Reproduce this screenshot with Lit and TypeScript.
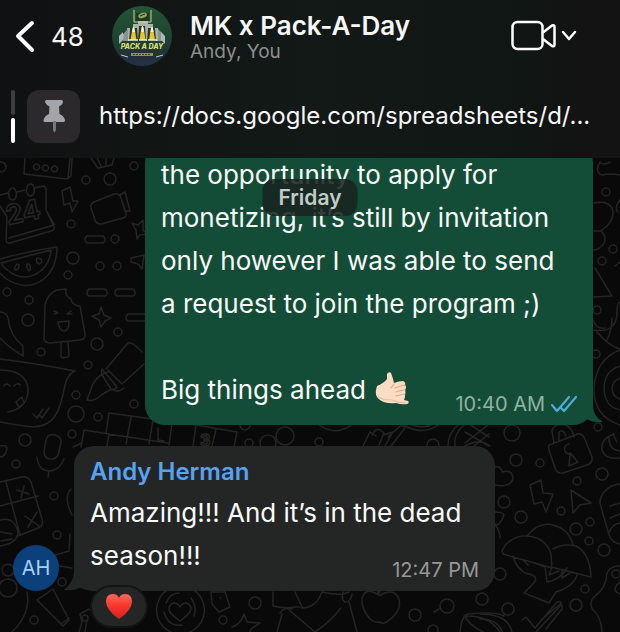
import { LitElement, html, css, svg } from "lit";
import { customElement, property } from "lit/decorators.js";

const dots: [number, number, number][] = [
  [134, 166, 4], [86, 180, 4], [110, 179, 6], [71, 224, 4], [115, 239, 4], [73, 258, 6],
  [100, 266, 4], [117, 266, 4], [68, 275, 4], [7, 292, 4], [29, 300, 4], [28, 320, 6],
  [118, 332, 4], [97, 344, 6], [41, 352, 4], [88, 365, 4], [1, 167, 5], [76, 395, 4],
  [134, 404, 4], [76, 414, 8], [98, 417, 4], [72, 434, 4], [25, 440, 6], [16, 464, 4],
  [54, 496, 4], [57, 535, 4], [8, 570, 6], [8, 588, 9], [62, 582, 4], [34, 620, 4],
  [285, 436, 9], [268, 443, 8], [249, 443, 4], [245, 425, 5], [319, 442, 4], [433, 445, 6],
  [512, 433, 8], [516, 460, 6], [540, 463, 4], [602, 474, 6], [577, 481, 4], [504, 502, 6],
  [521, 517, 6], [561, 511, 4], [576, 529, 6], [590, 522, 4], [589, 541, 4], [604, 550, 6],
  [500, 574, 6], [585, 589, 4], [576, 605, 6], [508, 609, 6], [482, 599, 6], [223, 620, 4],
  [255, 603, 6], [415, 615, 6], [447, 606, 7], [433, 630, 5], [606, 192, 4], [613, 249, 4],
  [602, 261, 4], [597, 310, 4], [596, 354, 4], [598, 427, 4], [85, 618, 3], [616, 574, 4],
];

const doodles: string[] = [
  "M25 158l-1 16 43 5 4-3 1-18M70 158l-2 20M36 164a3 3 0 1 0 1 0M45 165a3 3 0 1 0 1 0M54 166a3 3 0 1 0 1 0",
  "M91 158l7 10 14-3 2-7M97 158l4 8M106 158v8",
  "M8 194l1 0M17 192l8-2M34 188l9-2q3 0 3 4v20l8 17q1 3-3 4L10 243q-4 1-4-4l1-22L0 206M0 195l8-2M9 238l45-13M46 210l8 14",
  "M12 188a4 6 0 1 0 1 0M30 184a4 6 0 1 0 1 0",
  "M62 191l8-4 3 14 5 0-6 11-2-9-6 2z",
  "M91 208q-1-4 3-6l20-8q5-1 7 4l5 15q1 4-3 5l-22 6q-5 0-6-4zM120 195l5-3 5 19-5 0z",
  "M87 236h16a4 4 0 0 1 0 7H87a4 4 0 0 1 0-7z",
  "M132 223l6 2 5-5v10l4 4-7 1-3 4-1-9z",
  "M0 259q28-8 57-12 0 20-12 31-18 15-40 0L0 273M1 263l50-13q-1 12-9 20-16 13-32 2-7-5-9-9M17 264q-3 3-2 6 4 0 4-5zM27 264q-1 5 2 7 3-3 0-7zM37 258q-2 4 2 6 4-1 2-5z",
  "M131 258l13-3-2 14-4-5-7-2z",
  "M89 289h16a4 4 0 0 1 0 7H89a4 4 0 0 1 0-7zM117 289h16a4 4 0 0 1 0 7h-16a4 4 0 0 1 0-7zM145 314h-17a4 4 0 0 0 0 7h17",
  "M44 339l1-34q3-12 12-15l9-1q-1 5 2 8 3 1 4 5 3 4 8 4l5 28q1 5-5 6l-30 3q-5 0-6-4zM61 343l0 14q4 2 8-1l-1-14M54 311l4 2-4 1M71 311l-4 3 5 0M58 322l11-1q0 10-5 10-5-1-6-9z",
  "M101 307l3 8 7 3-6 3-4 6-2-7-7-4 7-2z",
  "M0 312q6 0 8 6 2 18 15 28l0 10Q8 347 0 338",
  "M0 359q40 5 75 12-8 4-10 14-4 22-10 31-6 10-22 11Q15 425 0 422M0 370q25 0 28 18 1 20-20 24M4 386q2-4 6 0M14 386q4-4 6-1M16 402l6-5 2 6-5 4zM33 414l4 4 6-9M39 415l3 3 7-10",
  "M106 369l22-26q4-2 14 9M108 370l14 14 22-20M102 369l15 18q-3 4-6 2l-9-14q-1-3 0-6zM108 372q-14 4-18 20l-3 8q6 2 13-4 13-9 14-6 4 3 10-2",
  "M46 440q2-7 9-5 7 2 6 8l-3 12q-3 5-9 4-5-2-5-7zM37 457q1 14 13 14 10-1 14-12M49 471l-1 6",
  "M0 446q7-2 7 3-2 8-7 8",
  "M84 430l25 4-2 12M109 413l87 12-3 21M108 434l60 9M131 417l-5 27M153 420l-4 24M172 423l-3 22M84 430l-3 17M109 413l-3 20M196 425l41 7-3 15M216 429l-4 17M158 428l0 12 6 1",
  "M0 482l22-5q6-1 9 5l11 37q2 7-4 9l-20 8M6 482l14 53M0 506l38-10M17 490l12 4M24 486l-3 12M25 516l14 10M37 512l-9 15M0 520q14-4 18 12 0 11-18 14M0 532l12 2M1 541l11-2",
  "M73 447l9-4M71 489q-8 9 1 26M70 534l-1 17-14 4 4 11 13 2",
  "M37 600l16-11 16 31-6 6zM61 624l8-6M27 592q4 22-15 40",
  "M80 614l9-5 9 8M80 614l2 8-3 10M87 620l-2 12",
  "M180 586a24 24 0 1 0 1 0M166 603q4-10 13-10M164 612q4 15 18 13M194 616q3-10-3-18M180 621q-10-7-11-11 0-7 6-7 4 1 5 4 2-4 6-4 5 1 5 6-1 5-11 12z",
  "M211 592l14 0 5 15-11 5-7-8zM220 598h1",
  "M244 614l3 8 13 1-9 6-2 6M244 614q-3 10-12 13",
  "M273 592v14q12 3 22 1l5 0M295 592l7 15M302 608q14 0 20-16M322 592q13 3 21 2l6-2M343 592q-2 8 2 10 6 0 7-8M349 602l8 30M289 610l26 22q14-9 26-24M280 613q4-6 12-4M277 632l5-18",
  "M377 594q-11-7-15 4-1 11 8 21 5 4 9 3 5 3 9-1 14-10 11-22-5-11-17-5-1 3-5 0zM378 594l-1-9M379 594q1-6 6-7",
  "M439 609l-5 3M460 632q1-15 8-18 28-3 36 2M464 616q25-1 36 16M465 615q2 9 18 17",
  "M318 424q18 14 36-1M363 446l7-14 6 4M372 435q5-10 12-2l-5 12M383 435l10-3-8 14M391 446l14-18q-3-5-8 1l-9 8",
  "M402 424q20 13 38 0M409 424q14 6 24 0M448 446q0-13 11-22M455 446q-2-12 10-22M465 432l24 14M469 424l20 13M465 443l24-19M474 446l15-12M465 446q14-8 25 0",
  "M552 444q-5 0-3 6l6 18q2 6 8 5l24-8q6-2 5-8l-8-20q-3-5-9-2zM554 443l-2-12q2-8 13-6 7 2 9 12M559 440v-8q4-4 7 4M569 444a5 5 0 1 0 1 10l-1 12 9-4-8-9",
  "M617 442q-5-10-3-8-14 5-12 16 3 10 18 8M609 438q0 12 11 13",
  "M495 467q6-1 7 5 10-3 11 6-2 10-18 7",
  "M530 485l11-5 2 13 10 1-7 18-4-10-8 2zM571 490l20 13-11 2-7 8z",
  "M620 484q-10 1-15 7-5 5-5 12l9 32q3 8 11 9M610 506l10-3M610 518l10-4M609 533q3-9 11-10",
  "M502 551q5-12 20-15 23-1 29 18l1 14-49-14zM527 536q12-15 26-11 16 4 20 20M553 549q10-6 23-3 14 7 15 31l-40-10M513 556q2 10 12 17 16 3 8 11l-9 9 25 10 7-11q18-6 21-17M535 563l10 4 2 15q13-2 20-14M552 567l-3 8 10-4M562 571v7l8-5M524 561l4 4",
  "M495 512q8 0 9 3-4 11-9 10M495 524q6 10 5 14",
  "M522 620l4-3 9 11 22-26q5-1 4 3l-25 27M541 620l18-15q4-1 3 4l-16 20",
  "M480 614q28 0 32 18M480 619q18 0 22 13",
  "M620 566q-9-1-13 7-1 16-12 23-7 7-2 14 8 6 9 22M620 582q-10 8 0 12",
  "M600 162q-6 10 2 13 9-2 18 0M600 162q2 4 10 0",
  "M594 203q16-3 19 8 1 11-12 20l-8 0M601 231q6 6 3 12-4 7-11 7M595 268l17 28-19 1M620 200q-6 8-2 12M620 262l-5 4",
  "M593 330q24 4 24-18 0-10 3-10M597 332q12 14 23 17M593 320q4 10 12 8M612 318q0 12-5 22",
  "M620 350q-24 9-26 38-1 28 26 37M620 366q-16 5-16 23 1 18 16 21M620 378q-8 3-8 11 1 8 8 10",
];

@customElement("chat-wallpaper")
class ChatWallpaper extends LitElement {
  static styles = css`
    :host { display: block; position: absolute; inset: 0; }
    .art { display: block; width: 100%; height: 100%; }
    .line { fill: none; stroke: #252525; stroke-width: 1.5; stroke-linecap: round; stroke-linejoin: round; }
    .num { font-family: Inter, sans-serif; font-weight: 700; }
  `;
  render() {
    return html`<svg class="art" viewBox="0 158 620 474" preserveAspectRatio="xMidYMin slice" aria-hidden="true">
      <g class="line">
        ${doodles.map((d) => svg`<path d=${d}></path>`)}
        ${dots.map(([x, y, r]) => svg`<circle cx=${x} cy=${y} r=${r}></circle>`)}
        <text class="num" x="8" y="225" font-size="27" transform="rotate(-12 8 225)">24</text>
        <text class="num" x="200" y="446" font-size="16">3</text>
      </g>
    </svg>`;
  }
}

@customElement("team-logo")
class TeamLogo extends LitElement {
  static styles = css`
    :host { display: block; flex: none; width: 60px; height: 60px; }
    .logo { display: block; width: 100%; height: 100%; }
    .word { font: italic 800 7px Inter, sans-serif; fill: #dcdc74; }
  `;
  render() {
    return html`<svg class="logo" viewBox="0 0 60 60" role="img" aria-label="Group photo">
      <defs>
        <linearGradient id="sky" x1="0" y1="0" x2="0" y2="1">
          <stop offset="0" stop-color="#245536"></stop>
          <stop offset="0.55" stop-color="#1c4430"></stop>
          <stop offset="0.85" stop-color="#202f3b"></stop>
          <stop offset="1" stop-color="#25304a"></stop>
        </linearGradient>
      </defs>
      <circle cx="30" cy="30" r="30" fill="url(#sky)"></circle>
      <path d="M11 35v-7l4-1v-5h6v-4h5v-3h10v3h5v4h5v5l4 1v7z" fill="#a9b3ad"></path>
      <path d="M12 27l4-4v12h-5zM46 23l4 4 1 8h-5z" fill="#87948f"></path>
      <path d="M22 4v12h17V4" fill="none" stroke="#d5cf8d" stroke-width="1"></path>
      <path d="M24 7h13v8H24z" fill="#1d3826"></path>
      <ellipse cx="30.500" cy="9.500" rx="4.500" ry="2.500" transform="rotate(-18 30 9)" fill="#93a84a"></ellipse>
      <path d="M28 10l5-2" stroke="#173422" stroke-width="1"></path>
      <path d="M17 35l1-13h7l1 13zM26 35l1-15h6l1 15zM35 35l1-13h7l1 13z" fill="#243b31"></path>
      <path d="M18.500 34l2-12h2l2 12zM27.500 34l2-13h2l2 13zM37 34l2-12h2l2 12z" fill="#e9c42f"></path>
      <path d="M20 26l1-5h1l1 5zM29 26l1-6h1l1 6zM38.500 26l1-5h1l1 5z" fill="#fbf6d8"></path>
      <path d="M16 34h10M27 34h8M36 34h9" stroke="#f3efc5" stroke-width="1.500"></path>
      <path d="M7 30l4-4v8l-4 4zM53 30l-4-4v8l4 4z" fill="#aeb8b6"></path>
      <text class="word" x="30" y="43" text-anchor="middle">PACK A DAY</text>
      <path d="M19 47h22v3H19z" fill="#a08b4b"></path>
      <path d="M21 48.500h18" stroke="#3a3a2a" stroke-width="1" stroke-dasharray="2 1"></path>
      <path d="M9 49l7 2M51 49l-7 2" stroke="#c6cdc8" stroke-width="1"></path>
    </svg>`;
  }
}

@customElement("chat-header")
class ChatHeader extends LitElement {
  static styles = css`
    :host {
      display: block; position: relative; z-index: 2; color: #f7f7f7;
      background: linear-gradient(90deg, #101112 0%, #111514 22%, #121917 50%, #101614 85%, #131313 94%);
    }
    .bar { display: flex; align-items: center; height: 72px; padding: 0 43px 0 14px; box-sizing: border-box; }
    button { border: 0; margin: 0; padding: 0; background: none; color: inherit; font: inherit; display: flex; align-items: center; }
    svg { display: block; flex: none; }
    .back { width: 98px; gap: 15px; font-size: 26px; }
    .who { flex: 1; gap: 18px; text-align: left; }
    .names { display: flex; flex-direction: column; padding-top: 4px; }
    .title { font-size: 26px; line-height: 28px; font-weight: 600; white-space: nowrap; }
    .members { font-size: 19px; line-height: 24px; color: #8b8f8e; }
    .call { gap: 4px; }
    .pinned { display: flex; align-items: center; height: 86px; padding: 2px 20px 0 11px; box-sizing: border-box; }
    .ticks { display: flex; flex-direction: column; gap: 3px; margin-right: 12px; }
    .tick { width: 4px; height: 25px; border-radius: 2px; background: #3c3e3e; }
    .tick.on { background: #fff; }
    .tile { width: 53px; height: 53px; border-radius: 12px; background: #2b292b; display: grid; place-items: center; margin-right: 19px; flex: none; }
    a { color: inherit; text-decoration: none; font-size: 24px; line-height: 32px; overflow: hidden; white-space: nowrap; text-overflow: ellipsis; }
  `;
  render() {
    return html`
      <div class="bar">
        <button class="back" aria-label="Back, 48 unread chats">
          <svg width="22" height="34" viewBox="0 0 22 34"><path d="M18 4L4 17l14 14" fill="none" stroke="#fff" stroke-width="4" stroke-linecap="round" stroke-linejoin="round"></path></svg>
          <span>48</span>
        </button>
        <button class="who">
          <team-logo></team-logo>
          <span class="names"><span class="title">MK x Pack-A-Day</span><span class="members">Andy, You</span></span>
        </button>
        <button class="call" aria-label="Video call">
          <svg width="46" height="32" viewBox="0 0 46 32"><g fill="none" stroke="#fff" stroke-width="2.500" stroke-linejoin="round"><rect x="1.500" y="2" width="30" height="27" rx="5"></rect><path d="M32 12.500l9-7q2.500-1 2.500 1.500v17.500q0 2.500-2.500 1.500l-9-7"></path></g></svg>
          <svg width="16" height="12" viewBox="0 0 16 12"><path d="M2 2l6 7 6-7" fill="none" stroke="#fff" stroke-width="2.500" stroke-linecap="round" stroke-linejoin="round"></path></svg>
        </button>
      </div>
      <div class="pinned">
        <div class="ticks"><div class="tick"></div><div class="tick on"></div></div>
        <div class="tile">
          <svg width="24" height="34" viewBox="0 0 24 34" aria-hidden="true"><path d="M4.500 1h15q1.500 0 1.500 1.500 0 3-4 5l.5 7.500q5 2 5.500 6.500 0 1.500-1.500 1.500H3q-1.500 0-1.500-1.500Q2 17 7 15l.5-7.500q-4-2-4.500-5Q3 1 4.500 1z" fill="#a5a4aa"></path><path d="M11 22h3v9l-1.500 3L11 31z" fill="#77767b"></path></svg>
        </div>
        <a href="https://docs.google.com/spreadsheets/d/">https://docs.google.com/spreadsheets/d/...</a>
      </div>`;
  }
}

@customElement("chat-bubble")
class ChatBubble extends LitElement {
  @property() kind = "in";
  @property() author = "";
  @property() time = "";
  static styles = css`
    :host { display: block; position: relative; width: 100%; box-sizing: border-box; color: #f8faf9; }
    .bubble { position: relative; isolation: isolate; border-radius: 20px; padding: 10px 16px 14px; background: #242626; }
    .bubble.out { background: #144d37; }
    .author { display: block; font-size: 24px; line-height: 32px; font-weight: 600; color: #58a2f2; margin-bottom: 3px; }
    .text { font-size: 26px; line-height: 43px; white-space: pre-line; }
    .meta { position: absolute; right: 16px; bottom: 9px; display: flex; align-items: center; gap: 6px; font-size: 20px; line-height: 24px; color: #969898; }
    .out .meta { color: #8fb3a3; }
    .tail { position: absolute; z-index: -1; bottom: 0; left: -10px; }
    .out .tail { left: auto; right: -10px; }
  `;
  render() {
    const out = this.kind === "out";
    return html`<div class="bubble ${out ? "out" : ""}">
      <svg class="tail" width="36" height="36" viewBox="0 0 36 36" aria-hidden="true">
        ${out
          ? svg`<path d="M26 0v18q1 10 10 15-9 1-16-3-8 6-20 6V0z" fill="#144d37"></path>`
          : svg`<path d="M10 0v18q-1 10-10 17 9 1 16-2 8 3 20 3V0z" fill="#242626"></path>`}
      </svg>
      ${this.author ? html`<span class="author">${this.author}</span>` : ""}
      <div class="text"><slot></slot></div>
      <div class="meta"><time>${this.time}</time>${out
        ? html`<svg width="26" height="18" viewBox="0 0 26 18" role="img" aria-label="Read"><path d="M1 10l5 6L18 2M10 13l3 3L25 2" fill="none" stroke="#4cabdc" stroke-width="2.200" stroke-linecap="round" stroke-linejoin="round"></path></svg>`
        : ""}</div>
    </div>`;
  }
}

@customElement("app-root")
class AppRoot extends LitElement {
  static styles = css`
    :host {
      display: flex; flex-direction: column; min-height: 100vh; overflow: hidden;
      background: #090909; font-family: Inter, "Noto Sans", sans-serif;
    }
    .chat { position: relative; flex: 1; }
    .day {
      position: absolute; z-index: 1; top: 21px; left: 50%; transform: translateX(-50%);
      padding: 4px 16px; border-radius: 12px; background: rgba(24, 36, 31, 0.87);
      color: #c2cbc7; font-size: 21px; line-height: 29px; font-weight: 600;
    }
    .sent { width: 448px; max-width: 80%; margin: -15px 27px 0 auto; }
    .received { display: flex; align-items: flex-end; gap: 15px; margin-top: 21px; padding-left: 13px; position: relative; }
    .received-bubble { width: 421px; max-width: 80%; }
    .initials {
      width: 46px; height: 46px; border-radius: 50%; background: #0b407a; color: #a5d0fb;
      display: grid; place-items: center; font-size: 20px; flex: none;
    }
    .hand { display: inline-block; vertical-align: -6px; margin-left: 2px; }
    .reaction {
      position: relative; display: flex; align-items: center; justify-content: center;
      width: 58px; height: 43px; margin: -6px 0 0 90px; padding: 0;
      border: 2px solid #121313; border-radius: 22px; background: #242626; box-sizing: border-box;
    }
  `;
  render() {
    return html`
      <chat-header></chat-header>
      <main class="chat">
        <chat-wallpaper></chat-wallpaper>
        <div class="day">Friday</div>
        <chat-bubble class="sent" kind="out" time="10:40 AM">the opportunity to apply for
monetizing, it’s still by invitation
only however I was able to send
a request to join the program ;)

Big things ahead <svg class="hand" width="34" height="34" viewBox="0 0 34 34" role="img" aria-label="Call me hand">
            <path d="M12 3q2-3 4-1 2 5 3 10 5-2 9-2 3 1 2 4 2 2 0 5 1 2 0 4l0 3-1 3 4 1q2 2-1 3-5 1-11-1-10 1-16-3-5-3-4-10l1-4q7-3 10-7z" fill="#fbdcc4"></path>
            <path d="M19 13l-3 4M20 17q5-2 10-3M21 21q5-2 9-2M21 25q4-1 9-2" fill="none" stroke="#dda98a" stroke-width="1.200" stroke-linecap="round"></path>
            <path d="M3 26q6 4 14 3 6 3 14 3" fill="none" stroke="#e5b699" stroke-width="1"></path>
          </svg></chat-bubble>
        <div class="received">
          <div class="initials">AH</div>
          <chat-bubble class="received-bubble" author="Andy Herman" time="12:47 PM">Amazing!!! And it’s in the dead
season!!!</chat-bubble>
        </div>
        <button class="reaction" aria-label="Heart reaction">
          <svg width="28" height="27" viewBox="0 0 28 27" aria-hidden="true">
            <defs><linearGradient id="red" x1="0" y1="0" x2="0" y2="1"><stop offset="0" stop-color="#ff6a58"></stop><stop offset="0.45" stop-color="#f8392f"></stop><stop offset="1" stop-color="#d8201c"></stop></linearGradient></defs>
            <path d="M14 26Q1 17 1 8.500 1 1 8 1q4.500 0 6 4 1.500-4 6-4 7 0 7 7.500Q27 17 14 26z" fill="url(#red)"></path>
          </svg>
        </button>
      </main>`;
  }
}
